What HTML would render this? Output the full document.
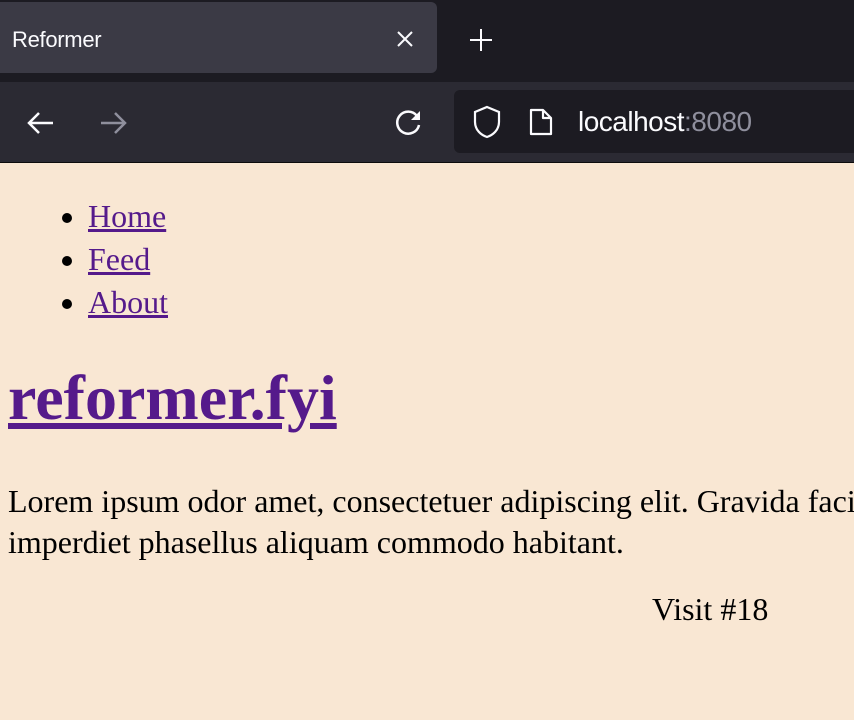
<!DOCTYPE html>
<html><head><style>
body{margin:0;width:854px;height:720px;overflow:hidden;background:#f9e7d3;font-family:"Liberation Serif",serif;}
.tabs{position:absolute;left:0;top:0;width:854px;height:82px;background:#1c1b22;}
.tab{position:absolute;left:0;top:2px;width:437px;height:71px;background:#3b3a45;border-radius:0 6px 6px 0;}
.tab span{position:absolute;left:12px;top:25px;color:#fbfbfe;font:22px "Liberation Sans",sans-serif;letter-spacing:-0.3px;}
.bar{position:absolute;left:0;top:82px;width:854px;height:80px;background:#2b2a33;border-bottom:1px solid #0c0c0d;}
.url{position:absolute;left:454px;top:8px;width:420px;height:63px;background:#1c1b22;border-radius:6px;}
.url span{position:absolute;left:124px;top:16px;color:#fbfbfe;font:28px "Liberation Sans",sans-serif;letter-spacing:-0.5px;}
.content{position:absolute;top:163px;left:0;right:0;}
ul{margin:0;padding-left:88px;position:absolute;top:32px;font-size:32px;line-height:43px;}
a{color:#551a8b;}
h1{position:absolute;left:8px;top:200px;margin:0;font-size:64px;line-height:70px;}
p{position:absolute;left:8px;top:318px;margin:0;font-size:32px;line-height:41px;white-space:nowrap;}
.v{position:absolute;left:652px;top:428px;font-size:32px;}
</style></head><body>
<div class="tabs"><div class="tab"><span>Reformer</span>
<svg style="position:absolute;left:396px;top:28px" width="18" height="18"><path d="M2 2L16 16M16 2L2 16" stroke="#fbfbfe" stroke-width="2"/></svg></div>
<svg style="position:absolute;left:469px;top:28px" width="24" height="24"><path d="M12 1V23M1 12H23" stroke="#fbfbfe" stroke-width="2"/></svg></div>
<div class="bar">
<svg style="position:absolute;left:26px;top:28px" width="30" height="26"><path d="M27 13H3M13 3L3 13L13 23" stroke="#fbfbfe" stroke-width="2.5" fill="none"/></svg>
<svg style="position:absolute;left:98px;top:28px" width="30" height="26"><path d="M3 13H27M17 3L27 13L17 23" stroke="#8f8f9d" stroke-width="2.5" fill="none"/></svg>
<svg style="position:absolute;left:393px;top:26px" width="32" height="30"><path d="M24 8A11 11 0 1 0 26 17" stroke="#fbfbfe" stroke-width="2.5" fill="none"/><path d="M27 3V12H18Z" fill="#fbfbfe"/></svg>
<div class="url">
<svg style="position:absolute;left:18px;top:15px" width="30" height="34"><path d="M15 2L27 7V17C27 25 21 30 15 32C9 30 3 25 3 17V7Z" stroke="#fbfbfe" stroke-width="2.2" fill="none"/></svg>
<svg style="position:absolute;left:74px;top:17px" width="26" height="30"><path d="M3 3H15L23 11V27H3Z M15 3V11H23" stroke="#fbfbfe" stroke-width="2.2" fill="none" stroke-linejoin="round"/></svg>
<span>localhost<span style="position:static;color:#8f8f9d">:8080</span></span></div></div>
<div class="content">
<ul><li><a href="#">Home</a></li><li><a href="#">Feed</a></li><li><a href="#">About</a></li></ul>
<h1><a href="#">reformer.fyi</a></h1>
<p>Lorem ipsum odor amet, consectetuer adipiscing elit. Gravida facilisi<br>imperdiet phasellus aliquam commodo habitant.</p>
<div class="v">Visit #18</div>
</div>
</body></html>
